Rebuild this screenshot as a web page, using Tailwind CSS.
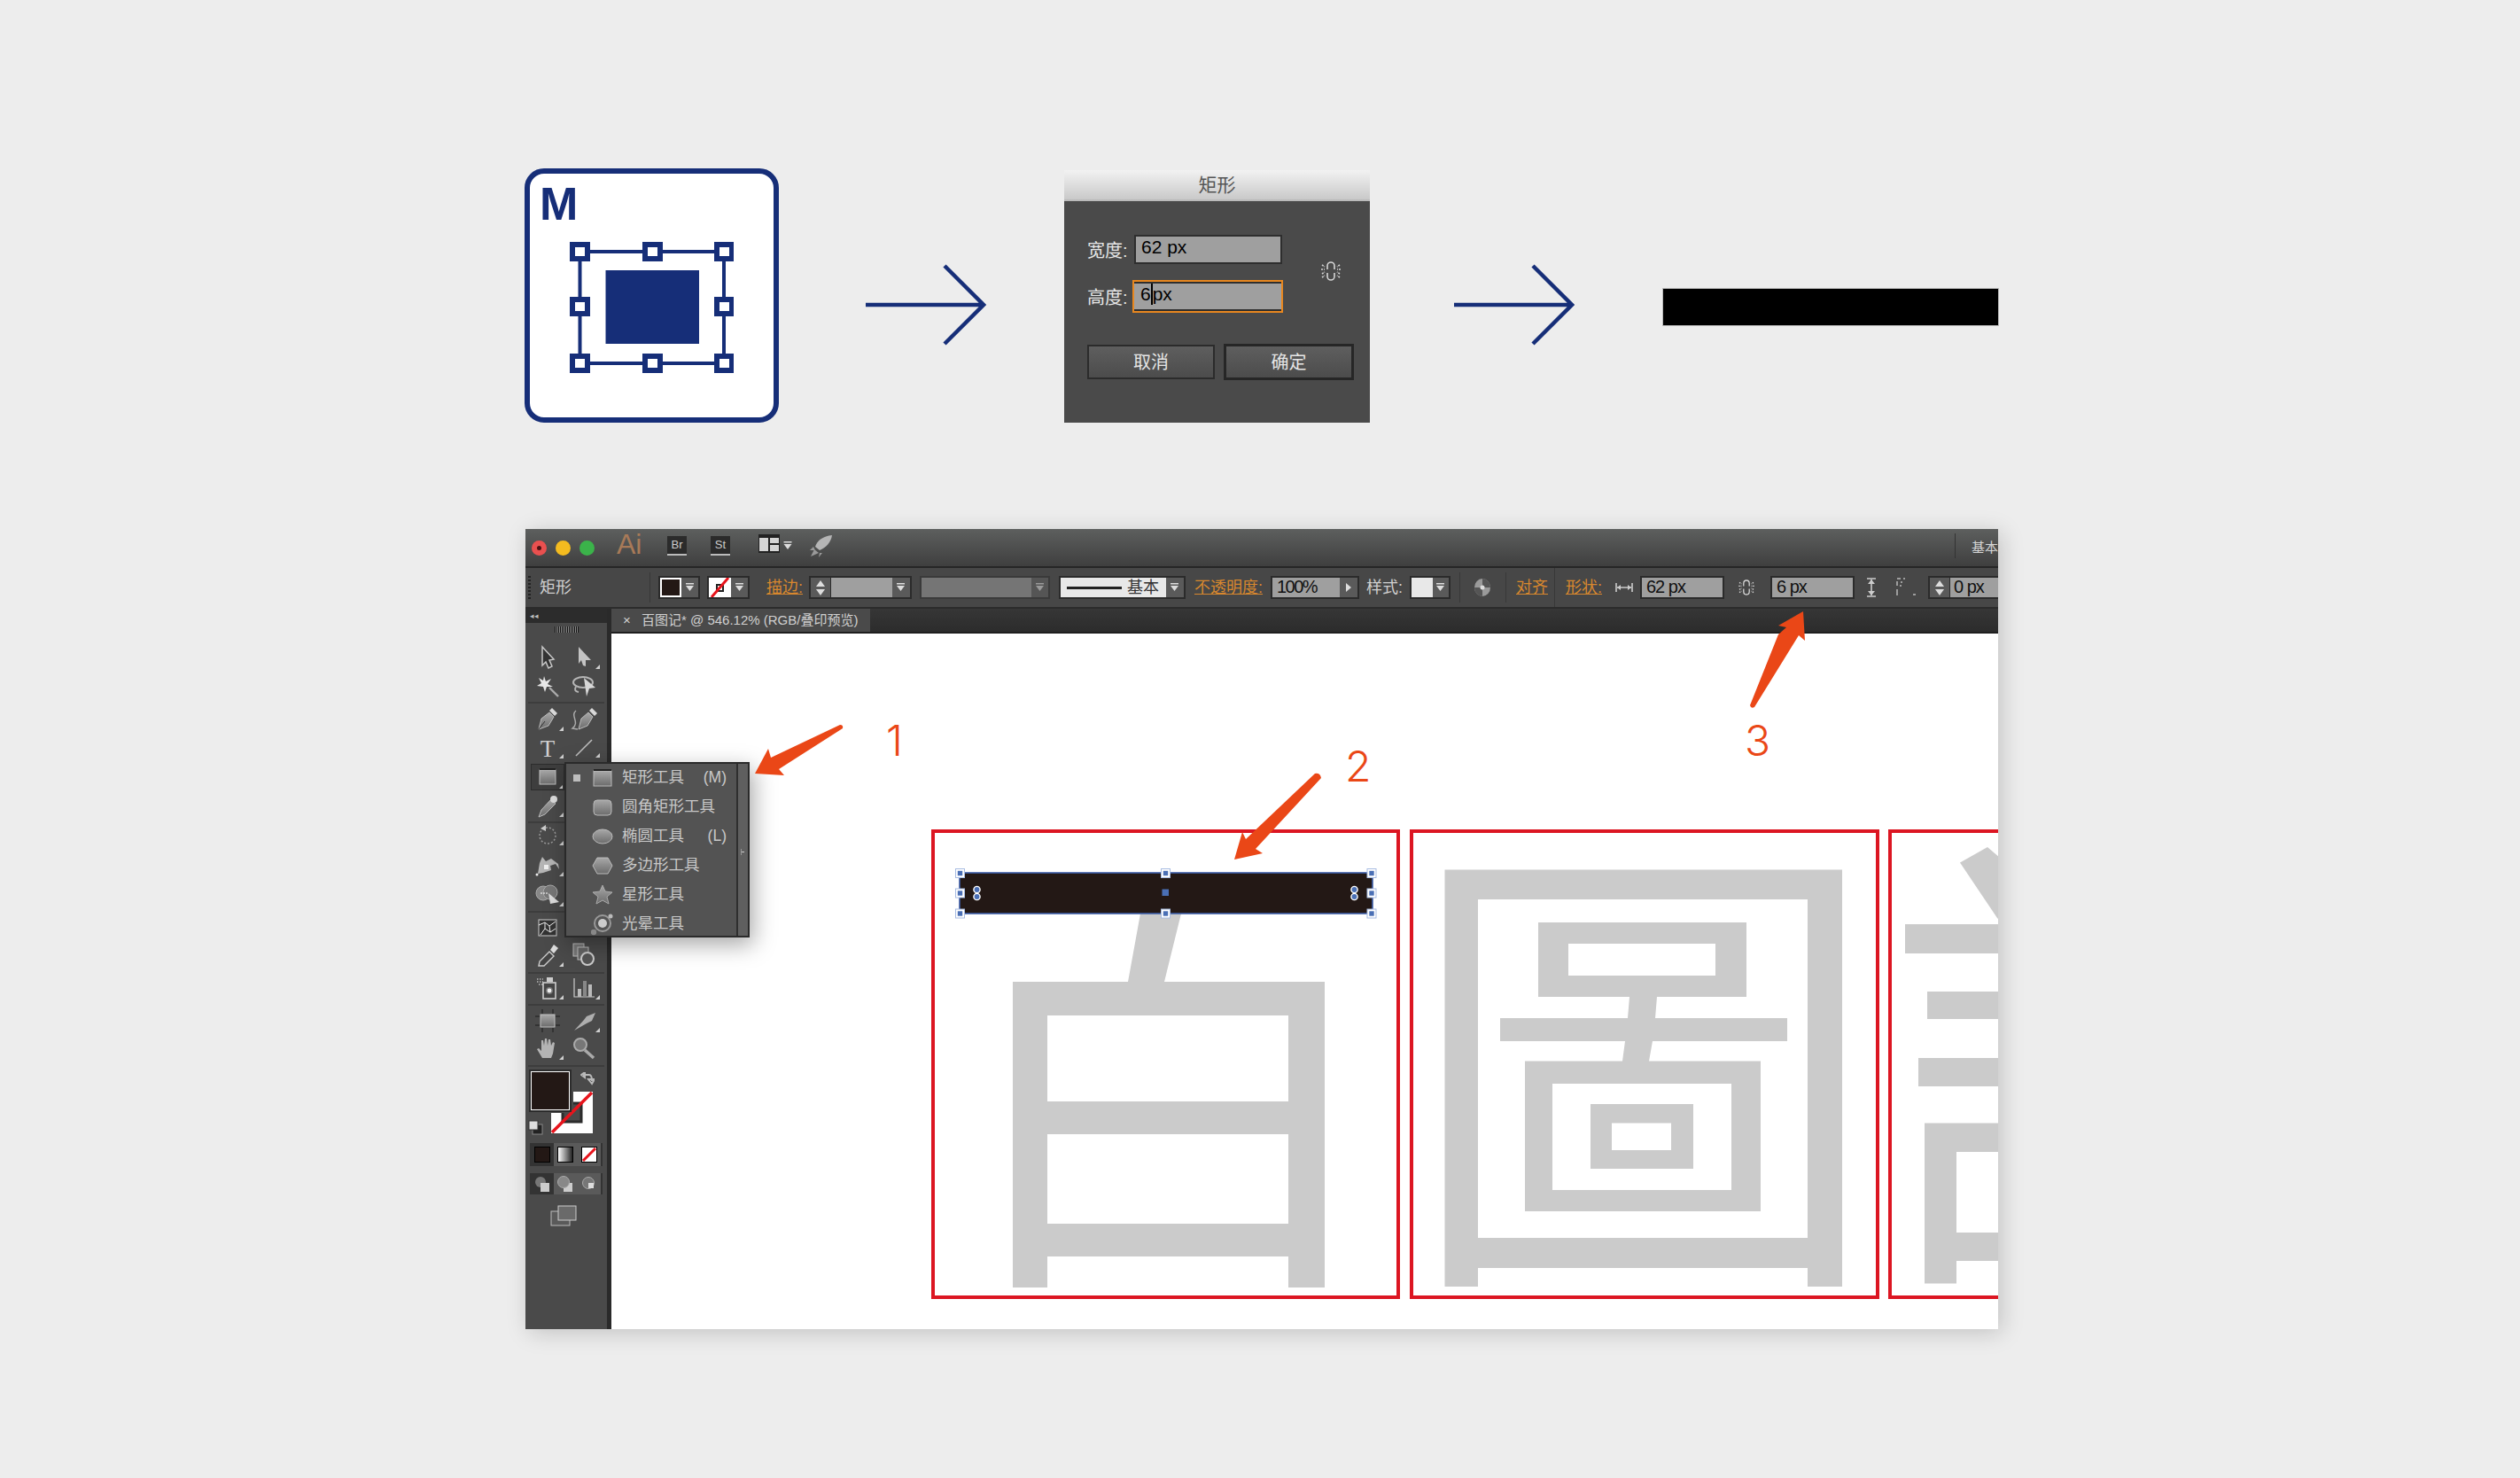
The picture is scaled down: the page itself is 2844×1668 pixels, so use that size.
<!DOCTYPE html>
<html lang="zh">
<head>
<meta charset="utf-8">
<title>矩形工具</title>
<script src="https://cdn.jsdelivr.net/npm/@tailwindcss/browser@4"></script>
</head>
<body>
<svg class="absolute w-0 h-0">
  <defs>
    <linearGradient id="g" x1="0" y1="0" x2="0" y2="1"><stop offset="0" stop-color="#a8a8a8"/><stop offset="1" stop-color="#6c6c6c"/></linearGradient>
    <path id="tri" d="M13 13 L18 13 L18 8Z" fill="#d0d0d0"/>
    <g id="dd"><rect x="0" y="0" width="9" height="1.5" fill="#ddd"/><path d="M0 3 H9 L4.5 9Z" fill="#ddd"/></g>
    <g id="h"><rect x="-5" y="-5" width="10" height="10" fill="#fff" stroke="#a8bce2" stroke-width="1"/><rect x="-2.7" y="-2.7" width="5.4" height="5.4" fill="#4a6fb5"/></g>
    <g id="eight"><circle cx="0" cy="-4" r="3.6" fill="#4a6fb5" stroke="#fff" stroke-width="1.4"/><circle cx="0" cy="4" r="3.6" fill="#4a6fb5" stroke="#fff" stroke-width="1.4"/></g>
    <g id="lnk" fill="none" stroke="#d6d6d6" stroke-width="1.6"><path d="M-4 -2 V-6 A4 4 0 0 1 4 -6 V-2"/><path d="M-4 2 V6 A4 4 0 0 0 4 6 V2"/><path d="M-10 -7 L-7 -5 M-11 -2 H-7 M-10 3 L-7 1 M-10 7 L-7 5 M10 -7 L7 -5 M11 -2 H7 M10 3 L7 1 M10 7 L7 5" stroke-dasharray="2 1"/></g>
  </defs>
</svg>

<div class="relative w-[2844px] h-[1668px] overflow-hidden bg-[#ededed] font-['Liberation_Sans','Noto_Sans_CJK_SC',sans-serif]">

  <!-- top row -->
  <div class="flex items-start pt-[190px] pl-[592px] h-[597px]">
    <div class="flex flex-col w-[287px] h-[287px] shrink-0 rounded-[22px] border-[6px] border-[#162e78] bg-white">
      <div class="mt-[8px] ml-[11px] text-[52px] leading-[52px] font-bold text-[#162e78]">M</div>
      <svg class="mt-[17px] ml-[45px]" width="185" height="148" viewBox="0 0 185 148">
        <rect x="11.5" y="11" width="162.5" height="126" fill="none" stroke="#162e78" stroke-width="4"/>
        <rect x="40.5" y="32" width="105.5" height="83" fill="#162e78"/>
        <g fill="#fff" stroke="#162e78" stroke-width="6">
          <rect x="3" y="3" width="17" height="16"/><rect x="85" y="3" width="17" height="16"/><rect x="166" y="3" width="17" height="16"/>
          <rect x="3" y="65" width="17" height="16"/><rect x="166" y="65" width="17" height="16"/>
          <rect x="3" y="129" width="17" height="16"/><rect x="85" y="129" width="17" height="16"/><rect x="166" y="129" width="17" height="16"/>
        </g>
      </svg>
    </div>

    <svg class="ml-[98px] mt-[108px] shrink-0" width="136" height="92" viewBox="0 0 136 92"><path d="M0 46 H133 M89 2 L133 46 L89 90" fill="none" stroke="#162e78" stroke-width="4.5"/></svg>

    <div class="ml-[88px] mt-[2px] w-[345px] h-[285px] shrink-0 flex flex-col bg-[#4a4a4a] rounded-t-[3px]">
      <div class="h-[35px] pt-[1px] flex items-center justify-center text-[21px] text-[#555] bg-[linear-gradient(to_bottom,#f2f2f2,#c9c9c9)] border-b-2 border-[#bbb]">矩形</div>
      <div class="flex pl-[26px] pt-[38px]">
        <div class="flex flex-col w-[221px]">
          <div class="flex items-center h-[33px]">
            <span class="w-[53px] mt-[3px] shrink-0 text-[20px] text-[#e6e6e6]">宽度:</span>
            <div class="w-[167px] h-[33px] shrink-0 flex items-start pl-[6px] border-2 border-[#2e2e2e] bg-[#9f9f9f] text-[21px] leading-[24px] text-black">62 px</div>
          </div>
          <div class="flex items-center h-[37px] mt-[18px]">
            <span class="w-[51px] mt-[2px] shrink-0 text-[20px] text-[#e6e6e6]">高度:</span>
            <div class="w-[170px] h-[37px] shrink-0 flex items-start pl-[7px] pt-[2px] border-2 border-[#e8871f] bg-[#9f9f9f] shadow-[inset_0_-2px_0_#2e2e2e,inset_0_2px_0_#2e2e2e] text-[21px] leading-[24px] text-black">6<span class="w-[2px] h-[24px] bg-black"></span>px</div>
          </div>
        </div>
        <svg class="ml-[40px] mt-[27px]" width="28" height="28" viewBox="-14 -14 28 28"><use href="#lnk"/></svg>
      </div>
      <div class="flex items-center pl-[26px] mt-[35px]">
        <div class="w-[144px] h-[39px] flex items-center justify-center border-2 border-[#2b2b2b] bg-[linear-gradient(to_bottom,#5e5e5e,#4c4c4c)] text-[20px] text-[#e6e6e6]">取消</div>
        <div class="ml-[10px] w-[147px] h-[41px] flex items-center justify-center border-[3px] border-[#262626] bg-[linear-gradient(to_bottom,#5e5e5e,#4c4c4c)] text-[20px] text-[#e6e6e6]">确定</div>
      </div>
    </div>

    <svg class="ml-[95px] mt-[108px] shrink-0" width="136" height="92" viewBox="0 0 136 92"><path d="M0 46 H133 M89 2 L133 46 L89 90" fill="none" stroke="#162e78" stroke-width="4.5"/></svg>

    <div class="ml-[99px] mt-[135px] w-[380px] h-[43px] shrink-0 bg-black border border-[#b8b8b8]"></div>
  </div>

  <!-- window -->
  <div class="relative ml-[593px] w-[1662px] h-[903px] flex flex-col bg-[#4a4a4a] shadow-[4px_4px_24px_rgba(0,0,0,0.18)]">
    <!-- title bar -->
    <div class="h-[44px] shrink-0 flex items-center overflow-hidden border-b-2 border-[#262626] bg-[linear-gradient(to_bottom,#5d5f5e,#3f3f3f)] pl-[7px]">
      <span class="w-[17px] h-[17px] shrink-0 rounded-full bg-[#e9504f] flex items-center justify-center"><span class="w-[5px] h-[5px] rounded-full bg-[#4a1212]"></span></span>
      <span class="ml-[10px] w-[17px] h-[17px] shrink-0 rounded-full bg-[#f4bb1f]"></span>
      <span class="ml-[10px] w-[17px] h-[17px] shrink-0 rounded-full bg-[#3bb34a]"></span>
      <span class="ml-[25px] w-[28px] -mt-[8px] shrink-0 text-[32px] leading-[32px] text-[#a87a58]">Ai</span>
      <span class="ml-[29px] w-[22px] h-[22px] -mt-[4px] shrink-0 flex items-center justify-center bg-[#2b2b2b] border-b-2 border-[#bbb] text-[13px] text-[#ccc]">Br</span>
      <span class="ml-[27px] w-[22px] h-[22px] -mt-[4px] shrink-0 flex items-center justify-center bg-[#2b2b2b] border-b-2 border-[#bbb] text-[13px] text-[#ccc]">St</span>
      <svg class="ml-[32px] -mt-[8px] shrink-0" width="24" height="22" viewBox="0 0 24 22"><rect width="24" height="2" fill="#222"/><rect x="0" y="2" width="24" height="19" fill="#222"/><rect x="1" y="4" width="10" height="15" fill="#d5d5d5"/><rect x="13" y="4" width="10" height="6" fill="#d5d5d5"/><rect x="13" y="12" width="10" height="7" fill="#d5d5d5"/></svg>
      <svg class="ml-[3px] -mt-[4px] shrink-0" width="12" height="12" viewBox="0 0 12 12"><use href="#dd" x="1.5" y="1"/></svg>
      <svg class="ml-[19px] -mt-[2px] shrink-0" width="26" height="26" viewBox="0 0 26 26"><path d="M25 0 C15 1 8 6 6 13 L11 17 C18 14 24 8 25 0Z" fill="#b5b5b5"/><path d="M4 13 L0 17 L6 17Z M11 20 L10 25 L14 20Z M5 16 L1 24 L10 20Z" fill="#999"/></svg>
      <span class="ml-[1266px] w-[1px] h-[28px] -mt-[4px] shrink-0 bg-[#333]"></span>
      <span class="ml-[18px] w-[30px] shrink-0 whitespace-nowrap text-[15px] text-[#d6d6d6]">基本</span>
    </div>

    <!-- control bar -->
    <div class="h-[46px] shrink-0 flex items-center overflow-hidden border-b-2 border-[#2b2b2b] bg-[#474747] text-[18px] text-[#d0d0d0]">
      <span class="ml-[3px] w-[3px] h-[27px] shrink-0 bg-[repeating-linear-gradient(to_bottom,#222_0,#222_2px,transparent_2px,transparent_4px)]"></span>
      <span class="ml-[10px] w-[36px] mt-[1px] shrink-0">矩形</span>
      <span class="ml-[88px] w-[1px] h-[34px] shrink-0 bg-[#383838]"></span>
      <div class="ml-[9px] w-[47px] h-[26px] shrink-0 flex border-2 border-[#2b2b2b] bg-[#5a5a5a]">
        <span class="w-[24px] h-full border-2 border-white bg-[#231815]"></span>
        <span class="flex-1 flex items-center justify-center"><svg width="10" height="10"><use href="#dd"/></svg></span>
      </div>
      <div class="ml-[8px] w-[48px] h-[26px] shrink-0 flex border-2 border-[#2b2b2b] bg-[#5a5a5a]">
        <svg width="25" height="22" viewBox="0 0 25 22"><rect width="25" height="22" fill="#fff"/><rect x="9" y="8" width="7" height="7" fill="none" stroke="#222" stroke-width="2"/><path d="M3 22 L22 0" stroke="#e8141c" stroke-width="3"/></svg>
        <span class="flex-1 flex items-center justify-center"><svg width="10" height="10"><use href="#dd"/></svg></span>
      </div>
      <span class="ml-[19px] w-[40px] mt-[1px] shrink-0 whitespace-nowrap underline text-[#d8872e]">描边:</span>
      <div class="ml-[8px] w-[116px] h-[26px] shrink-0 flex border-2 border-[#2b2b2b] bg-[#5a5a5a]">
        <span class="w-[23px] flex flex-col items-center justify-center gap-[3px] border-r border-[#2b2b2b]"><svg width="10" height="7"><path d="M0 7 H10 L5 0Z" fill="#ddd"/></svg><svg width="10" height="7"><path d="M0 0 H10 L5 7Z" fill="#ddd"/></svg></span>
        <span class="w-[69px] bg-[#9f9f9f]"></span>
        <span class="flex-1 flex items-center justify-center"><svg width="10" height="10"><use href="#dd"/></svg></span>
      </div>
      <div class="ml-[9px] w-[147px] h-[26px] shrink-0 flex border-2 border-[#3a3a3a] bg-[#555]">
        <span class="w-[124px] bg-[#757575]"></span>
        <span class="flex-1 flex items-center justify-center opacity-50"><svg width="10" height="10"><use href="#dd"/></svg></span>
      </div>
      <div class="ml-[10px] w-[143px] h-[26px] shrink-0 flex border-2 border-[#2b2b2b] bg-[#5a5a5a]">
        <span class="w-[119px] flex items-center bg-[#e8e8e8] pl-[7px] text-[#333]"><span class="w-[62px] h-[3px] bg-[#222]"></span><span class="ml-[6px] text-[18px] leading-[20px]">基本</span></span>
        <span class="flex-1 flex items-center justify-center"><svg width="10" height="10"><use href="#dd"/></svg></span>
      </div>
      <span class="ml-[10px] w-[77px] mt-[1px] shrink-0 whitespace-nowrap underline text-[#d8872e]">不透明度:</span>
      <div class="ml-[9px] w-[100px] h-[26px] shrink-0 flex border-2 border-[#2b2b2b] bg-[#5a5a5a]">
        <span class="w-[76px] pl-[5px] bg-[#9f9f9f] text-[20px] leading-[20px] tracking-[-1.5px] text-[#111]">100%</span>
        <span class="flex-1 flex items-center justify-center"><svg width="8" height="10"><path d="M1 0 L7 5 L1 10Z" fill="#ddd"/></svg></span>
      </div>
      <span class="ml-[8px] w-[40px] mt-[1px] shrink-0 whitespace-nowrap">样式:</span>
      <div class="ml-[9px] w-[46px] h-[26px] shrink-0 flex border-2 border-[#2b2b2b] bg-[#5a5a5a]">
        <span class="w-[24px] bg-[#e8e8e8]"></span>
        <span class="flex-1 flex items-center justify-center"><svg width="10" height="10"><use href="#dd"/></svg></span>
      </div>
      <span class="ml-[10px] w-[1px] h-[34px] shrink-0 bg-[#383838]"></span>
      <svg class="ml-[16px] shrink-0" width="18" height="20" viewBox="0 0 18 20"><ellipse cx="9" cy="10" rx="9" ry="10" fill="#9a9a9a"/><path d="M9 10 L9 0 A9 10 0 0 1 18 10Z M9 10 L9 20 A9 10 0 0 1 0 10Z" fill="#555"/><circle cx="9" cy="10" r="2.5" fill="#ddd"/></svg>
      <span class="ml-[17px] w-[1px] h-[34px] shrink-0 bg-[#383838]"></span>
      <span class="ml-[11px] w-[36px] mt-[1px] shrink-0 whitespace-nowrap underline text-[#d8872e]">对齐</span>
      <span class="ml-[7px] w-[1px] h-[44px] shrink-0 bg-[#383838]"></span>
      <span class="ml-[12px] w-[40px] mt-[1px] shrink-0 whitespace-nowrap underline text-[#d8872e]">形状:</span>
      <svg class="ml-[16px] shrink-0" width="20" height="12" viewBox="0 0 20 12"><path d="M1 1 V11 M19 1 V11 M2 6 H18" stroke="#ccc" stroke-width="1.6" fill="none"/><path d="M2 6 L6 3 V9Z M18 6 L14 3 V9Z" fill="#ccc"/></svg>
      <div class="ml-[8px] w-[95px] h-[26px] shrink-0 pl-[5px] border-2 border-[#2b2b2b] bg-[#9f9f9f] text-[20px] leading-[20px] tracking-[-1px] text-[#111]">62 px</div>
      <svg class="ml-[14px] shrink-0" width="22" height="22" viewBox="-11 -11 22 22"><use href="#lnk" transform="scale(0.8)"/></svg>
      <div class="ml-[16px] w-[95px] h-[26px] shrink-0 pl-[5px] border-2 border-[#2b2b2b] bg-[#9f9f9f] text-[20px] leading-[20px] tracking-[-1px] text-[#111]">6 px</div>
      <svg class="ml-[13px] shrink-0" width="12" height="22" viewBox="0 0 12 22"><path d="M1 1 H11 M1 21 H11 M6 2 V20" stroke="#ccc" stroke-width="1.6" fill="none"/><path d="M6 2 L2 7 H10Z M6 20 L2 15 H10Z" fill="#ccc"/></svg>
      <svg class="ml-[22px] shrink-0" width="22" height="22" viewBox="0 0 22 22"><path d="M1 1 H5 M8 1 H10 M1 4 V9 M1 13 V20 M5 5 H7 M5 8 V10 M19 19 H22" stroke="#bbb" stroke-width="1.5" fill="none"/></svg>
      <div class="ml-[14px] w-[100px] h-[26px] shrink-0 flex border-2 border-[#2b2b2b] bg-[#5a5a5a]">
        <span class="w-[23px] flex flex-col items-center justify-center gap-[3px] border-r border-[#2b2b2b]"><svg width="10" height="7"><path d="M0 7 H10 L5 0Z" fill="#ddd"/></svg><svg width="10" height="7"><path d="M0 0 H10 L5 7Z" fill="#ddd"/></svg></span>
        <span class="flex-1 pl-[4px] bg-[#9f9f9f] text-[20px] leading-[20px] tracking-[-1px] text-[#111]">0 px</span>
      </div>
    </div>

    <!-- body -->
    <div class="flex-1 flex min-h-0">
      <!-- tool panel -->
      <div class="w-[97px] shrink-0 flex flex-col bg-[#4a4a4a] border-r-[5px] border-[#2a2a2a]">
        <div class="h-[16px] shrink-0 flex items-center pl-[5px] bg-[#2c2c2c] text-[9px] leading-[9px] text-[#bbb]">◂◂</div>
        <div class="h-[23px] shrink-0 flex justify-center pt-[4px]"><span class="w-[27px] h-[7px] bg-[repeating-linear-gradient(to_right,#111_0,#111_1px,#8a8a8a_1px,#8a8a8a_2px)]"></span></div>

        <div class="h-[32px] shrink-0 flex pl-[4px]">
          <div class="w-[41px] flex items-center justify-center"><svg width="40" height="32" viewBox="-20 -16 40 32"><path d="M-6 -12 L7 2 L2 3 L5 10 L1 12 L-2 5 L-6 9Z" fill="#333" stroke="#c8c8c8" stroke-width="1.5"/></svg></div>
          <div class="w-[41px] flex items-center justify-center"><svg width="40" height="32" viewBox="-20 -16 40 32"><path d="M-6 -12 L8 3 L2 3 L2 10 L-1 9 L-3 3 L-6 7Z" fill="#c4c4c4"/><use href="#tri"/></svg></div>
        </div>
        <div class="h-[34px] shrink-0 flex pl-[4px]">
          <div class="w-[41px] flex items-center justify-center"><svg width="40" height="32" viewBox="-20 -16 40 32"><path d="M2 1 L12 11" stroke="#aaa" stroke-width="2.4"/><path d="M-4 -12 L-2 -6 L4 -9 L0 -3 L6 0 L-1 0 L-3 6 L-5 0 L-12 -1 L-7 -4 L-10 -10 L-5 -7Z" fill="#e8e8e8"/></svg></div>
          <div class="w-[41px] flex items-center justify-center"><svg width="40" height="32" viewBox="-20 -16 40 32"><ellipse cx="-1" cy="-5" rx="11" ry="6" fill="none" stroke="#b5b5b5" stroke-width="2"/><path d="M-9 0 Q-12 5 -6 6" fill="none" stroke="#b5b5b5" stroke-width="2"/><path d="M0 -10 L13 1 L6 2 L3 11Z" fill="#d8d8d8"/></svg></div>
        </div>
        <div class="h-[2px] mx-[3px] shrink-0 bg-[#3d3d3d]"></div>
        <div class="h-[36px] shrink-0 flex pl-[4px]">
          <div class="w-[41px] flex items-center justify-center"><svg width="40" height="32" viewBox="-20 -16 40 32"><path d="M-10 11 L-7 -1 L2 -8 L7 -3 L1 7Z" fill="url(#g)" stroke="#bbb"/><path d="M2 -10 L5 -13 L11 -7 L8 -4Z" fill="#d8d8d8"/><path d="M-10 11 L-3 2" stroke="#333"/><use href="#tri"/></svg></div>
          <div class="w-[41px] flex items-center justify-center"><svg width="40" height="32" viewBox="-20 -16 40 32"><path d="M-6 11 L-3 -1 L5 -8 L10 -3 L4 7Z" fill="url(#g)" stroke="#bbb"/><path d="M6 -10 L9 -13 L15 -7 L12 -4Z" fill="#d8d8d8"/><path d="M-9 -10 C-16 -4 -4 3 -13 10 L-7 11" fill="none" stroke="#aaa" stroke-width="1.5"/></svg></div>
        </div>
        <div class="h-[28px] shrink-0 flex pl-[4px]">
          <div class="w-[41px] flex items-center justify-center"><svg width="40" height="32" viewBox="-20 -16 40 32"><text x="0" y="10" text-anchor="middle" font-family="Liberation Serif" font-size="27" fill="#d0d0d0">T</text><use href="#tri" y="-1"/></svg></div>
          <div class="w-[41px] flex items-center justify-center"><svg width="40" height="32" viewBox="-20 -16 40 32"><path d="M-9 9 L9 -9" stroke="#bdbdbd" stroke-width="1.6"/><use href="#tri" y="-2"/></svg></div>
        </div>
        <div class="h-[38px] shrink-0 flex pl-[4px]">
          <div class="w-[41px] flex items-center justify-center"><div class="w-[38px] h-[30px] flex items-center justify-center bg-[#3e3e3e] border border-[#2c2c2c]"><svg width="36" height="28" viewBox="-18 -14 36 28"><rect x="-9" y="-8" width="18" height="16" fill="url(#g)" stroke="#c0c0c0"/><rect x="-9" y="-10" width="18" height="2" fill="#222"/><path d="M13 13 L17 13 L17 9Z" fill="#d0d0d0"/></svg></div></div>
          <div class="w-[41px]"></div>
        </div>
        <div class="h-[28px] shrink-0 flex pl-[4px]">
          <div class="w-[41px] flex items-center justify-center"><svg width="40" height="32" viewBox="-20 -16 40 32"><path d="M-10 12 L-7 4 L4 -8 L9 -3 L-3 9Z" fill="url(#g)" stroke="#bbb"/><circle cx="7" cy="-8" r="4" fill="#ddd"/><use href="#tri" y="-1"/></svg></div>
          <div class="w-[41px]"></div>
        </div>
        <div class="h-[2px] mt-[3px] mx-[3px] shrink-0 bg-[#3d3d3d]"></div>
        <div class="h-[28px] shrink-0 flex pl-[4px]">
          <div class="w-[41px] flex items-center justify-center"><svg width="40" height="32" viewBox="-20 -16 40 32"><circle cx="0" cy="0" r="9" fill="none" stroke="#999" stroke-width="1.5" stroke-dasharray="2 2"/><path d="M-8 -8 L-2 -12 L-2 -5Z" fill="#ccc"/><use href="#tri" y="-2"/></svg></div>
          <div class="w-[41px]"></div>
        </div>
        <div class="h-[40px] shrink-0 flex pl-[4px]">
          <div class="w-[41px] flex items-center justify-center"><svg width="40" height="32" viewBox="-20 -16 40 32"><path d="M-11 9 L-9 -3 L-6 -10 L-2 -5 L4 -8 L12 -2 L13 4 L9 -2 L3 0 L4 5 L-5 8Z" fill="#b5b5b5"/><rect x="-4" y="-1" width="5" height="5" fill="#eee"/><circle cx="-12" cy="10" r="1.5" fill="#eee"/><use href="#tri" y="-1"/></svg></div>
          <div class="w-[41px]"></div>
        </div>
        <div class="h-[26px] shrink-0 flex pl-[4px]">
          <div class="w-[41px] flex items-center justify-center"><svg width="40" height="32" viewBox="-20 -16 40 32"><circle cx="-5" cy="-2" r="8" fill="#888" stroke="#aaa"/><circle cx="3" cy="-3" r="8" fill="#777" stroke="#aaa"/><path d="M-8 -2 H1" stroke="#fff" stroke-dasharray="2 1"/><path d="M1 -2 L13 8 L3 10Z" fill="#ddd"/><use href="#tri"/></svg></div>
          <div class="w-[41px]"></div>
        </div>
        <div class="h-[2px] mt-[5px] mx-[3px] shrink-0 bg-[#3d3d3d]"></div>
        <div class="h-[34px] shrink-0 flex pl-[4px]">
          <div class="w-[41px] flex items-center justify-center"><svg width="40" height="32" viewBox="-20 -16 40 32"><rect x="-10" y="-9" width="20" height="18" fill="#333" stroke="#ccc"/><path d="M-10 -3 L-3 -6 L2 -2 L9 -7 M-8 8 L-3 1 L3 5 L9 1 M-3 -6 L-3 1 M2 -2 L3 5" stroke="#eee" fill="none"/></svg></div>
          <div class="w-[41px]"></div>
        </div>
        <div class="h-[28px] shrink-0 flex pl-[4px]">
          <div class="w-[41px] flex items-center justify-center"><svg width="40" height="32" viewBox="-20 -16 40 32"><path d="M-10 12 L-9 7 L2 -4 L7 1 L-4 12Z" fill="#444" stroke="#ccc" stroke-width="1.4"/><path d="M3 -6 L7 -12 L12 -8 L7 -2Z" fill="#ddd"/><use href="#tri"/></svg></div>
          <div class="w-[41px] flex items-center justify-center"><svg width="40" height="32" viewBox="-20 -16 40 32"><rect x="-12" y="-13" width="12" height="14" fill="#777" stroke="#bbb"/><rect x="-7" y="-9" width="12" height="14" fill="#666" stroke="#bbb"/><circle cx="4" cy="4" r="7" fill="#555" stroke="#ccc" stroke-width="2"/></svg></div>
        </div>
        <div class="h-[2px] mt-[5px] mx-[3px] shrink-0 bg-[#3d3d3d]"></div>
        <div class="h-[32px] shrink-0 flex pl-[4px]">
          <div class="w-[41px] flex items-center justify-center"><svg width="40" height="32" viewBox="-20 -16 40 32"><rect x="-5" y="-6" width="14" height="18" fill="#444" stroke="#ccc" stroke-width="1.6"/><rect x="-1" y="-12" width="7" height="5" fill="#ccc"/><circle cx="2" cy="3" r="3.2" fill="#eee" stroke="#777" stroke-width="1.5"/><path d="M-12 -10 H-5 M-12 -7 H-5 M-10 -4 H-5" stroke="#eee" stroke-dasharray="1.5 1.5"/><use href="#tri"/></svg></div>
          <div class="w-[41px] flex items-center justify-center"><svg width="40" height="32" viewBox="-20 -16 40 32"><path d="M-11 -11 V10 H12" fill="none" stroke="#ccc" stroke-width="1.2"/><rect x="-7" y="1" width="4" height="9" fill="#bbb"/><rect x="-1" y="-8" width="4" height="18" fill="#888"/><rect x="5" y="-4" width="4" height="14" fill="#bbb"/><use href="#tri"/></svg></div>
        </div>
        <div class="h-[2px] mt-[2px] mx-[3px] shrink-0 bg-[#3d3d3d]"></div>
        <div class="h-[34px] shrink-0 flex pl-[4px]">
          <div class="w-[41px] flex items-center justify-center"><svg width="40" height="32" viewBox="-20 -16 40 32"><rect x="-8" y="-7" width="16" height="14" fill="url(#g)" stroke="#c0c0c0"/><path d="M-14 -5 H-9 M9 -5 H14 M-14 5 H-9 M9 5 H14 M-6 -13 V-8 M6 -13 V-8 M-6 8 V13 M6 8 V13" stroke="#2c2c2c" stroke-width="1.5"/></svg></div>
          <div class="w-[41px] flex items-center justify-center"><svg width="40" height="32" viewBox="-20 -16 40 32"><path d="M-11 11 L0 -1 L3 -5 L13 -9 L9 0 L3 3 Z" fill="#aeaeae"/><use href="#tri"/></svg></div>
        </div>
        <div class="h-[28px] shrink-0 flex pl-[4px]">
          <div class="w-[41px] flex items-center justify-center"><svg width="40" height="32" viewBox="-20 -16 40 32"><path d="M-6 11 L-12 1 L-10 0 L-7 3 L-7 -9 L-5 -9 L-4 -3 L-3 -11 L-1 -11 L0 -3 L1 -10 L3 -10 L4 -3 L6 -7 L8 -6 L6 6 L4 11Z" fill="#b4b4b4"/><use href="#tri"/></svg></div>
          <div class="w-[41px] flex items-center justify-center"><svg width="40" height="32" viewBox="-20 -16 40 32"><circle cx="-4" cy="-4" r="7" fill="#777" stroke="#aaa" stroke-width="2"/><path d="M1 2 L11 11" stroke="#aaa" stroke-width="3.5"/></svg></div>
        </div>
        <div class="h-[2px] mt-[5px] mx-[3px] shrink-0 bg-[#3d3d3d]"></div>

        <div class="relative h-[79px] shrink-0">
          <svg class="absolute left-[29px] top-[28px]" width="47" height="47" viewBox="0 0 47 47"><rect width="47" height="47" fill="#fff"/><rect x="13" y="13" width="21" height="21" fill="#4a4a4a" stroke="#2c2c2c" stroke-width="3"/><rect x="0" y="0" width="25" height="24" fill="#4a4a4a"/><path d="M1 46 L46 1" stroke="#e8141c" stroke-width="3.5"/></svg>
          <div class="absolute left-[4px] top-[3px] w-[48px] h-[48px] border-2 border-[#2c2c2c] bg-white p-[1px]"><div class="w-full h-full bg-[#231815]"></div></div>
          <svg class="absolute left-[62px] top-[6px]" width="16" height="16" viewBox="0 0 16 16"><path d="M3 3 H10 Q13 3 13 10 M13 13 L9 8 H16Z M1 3 L5 0 V6Z" fill="none" stroke="#b8b8b8" stroke-width="2"/></svg>
          <svg class="absolute left-[3px] top-[60px]" width="17" height="17" viewBox="0 0 17 17"><rect x="5" y="5" width="11" height="11" fill="#222" stroke="#888"/><rect x="1" y="1" width="10" height="10" fill="#ddd" stroke="#333"/></svg>
        </div>

        <div class="mt-[7px] mx-[5px] h-[26px] shrink-0 flex items-center bg-[#333]">
          <div class="w-[27px] h-full flex items-center justify-center bg-[#333]"><span class="w-[18px] h-[18px] border border-black bg-[#231815]"></span></div>
          <div class="w-[26px] h-full flex items-center justify-center bg-[#5a5a5a]"><span class="w-[18px] h-[18px] border border-black bg-[linear-gradient(to_right,#fff,#222)]"></span></div>
          <div class="w-[27px] h-full flex items-center justify-center bg-[#5a5a5a]"><svg width="18" height="18" viewBox="0 0 18 18"><rect x="0.5" y="0.5" width="17" height="17" fill="#fff" stroke="#000"/><path d="M2 16 L16 2" stroke="#e8141c" stroke-width="3"/></svg></div>
        </div>
        <div class="mt-[8px] mx-[5px] h-[24px] shrink-0 flex items-center bg-[#333]">
          <div class="w-[27px] h-full flex items-center justify-center bg-[#333]"><svg width="20" height="20" viewBox="0 0 20 20"><circle cx="8" cy="8" r="6" fill="#777"/><rect x="8" y="9" width="10" height="10" fill="#ccc"/></svg></div>
          <div class="w-[26px] h-full flex items-center justify-center bg-[#5a5a5a]"><svg width="20" height="20" viewBox="0 0 20 20"><rect x="8" y="9" width="10" height="10" fill="#ccc"/><circle cx="8" cy="8" r="6.5" fill="#888" stroke="#aaa"/></svg></div>
          <div class="w-[27px] h-full flex items-center justify-center bg-[#5a5a5a]"><svg width="20" height="20" viewBox="0 0 20 20"><circle cx="9" cy="9" r="6.5" fill="#777" stroke="#aaa"/><rect x="9" y="9" width="6" height="6" fill="#ddd"/></svg></div>
        </div>
        <svg class="mt-[12px] ml-[28px] shrink-0" width="30" height="24" viewBox="0 0 30 24"><rect x="1" y="7" width="21" height="16" fill="#5a5a5a" stroke="#bbb"/><rect x="9" y="1" width="20" height="16" fill="#6a6a6a" stroke="#ccc"/></svg>
      </div>

      <!-- tabs + canvas -->
      <div class="flex-1 min-w-0 flex flex-col">
        <div class="h-[28px] shrink-0 flex bg-[linear-gradient(to_bottom,#363636,#2c2c2c)] border-b-2 border-[#1f1f1f]">
          <div class="w-[292px] h-[26px] flex items-center bg-[#4a4a4a] text-[15px] text-[#d0d0d0] whitespace-nowrap">
            <span class="ml-[13px] w-[21px]">×</span><span class="mt-[1px]">百图记* @ 546.12% (RGB/叠印预览)</span>
          </div>
        </div>
        <div class="flex-1 min-h-0 bg-white overflow-hidden">
          <svg width="1565" height="785" viewBox="690 715 1565 785">
            <g fill="none" stroke="#dc1622" stroke-width="4">
              <rect x="1053" y="938" width="525" height="526"/>
              <rect x="1593" y="938" width="526" height="526"/>
              <rect x="2133" y="938" width="200" height="526"/>
            </g>
            <g fill="#cbcbcb" fill-rule="evenodd">
              <path d="M1143 1108 H1273 L1287 1031 H1333 L1314 1108 H1495 V1453 H1454 V1418 H1182 V1453 H1143Z M1182 1146 H1454 V1243 H1182Z M1182 1280 H1454 V1381 H1182Z"/>
              <path d="M1630.5 981.5 H2079 V1452 H2040 V1431 H1668 V1452 H1630.5Z M1668 1015 H2040 V1397 H1668Z"/>
              <path d="M1736 1041 H1971 V1125 H1870 L1868 1149 H2017 V1175 H1865 L1861 1197.5 H1987 V1367 H1721 V1197.5 H1831 L1834 1175 H1693 V1149 H1837 L1839 1125 H1736Z M1770 1065 H1936 V1101 H1770Z M1752 1223 H1954 V1343 H1752Z"/>
              <path d="M1795 1246 H1911 V1319 H1795Z M1819 1267.5 H1886 V1298 H1819Z"/>
              <path d="M2212 973.5 L2243 956 L2256 967 V1038 L2254 1036Z"/>
              <path d="M2150 1043 H2256 V1076 H2150Z M2175 1119 H2256 V1150 H2175Z M2165 1194 H2256 V1226 H2165Z"/>
              <path d="M2172 1267.5 H2256 V1423 H2208 V1448.5 H2172Z M2208 1300 H2256 V1391 H2208Z"/>
            </g>
            <rect x="1083" y="985" width="466" height="46" fill="#231815" stroke="#3d5ea8" stroke-width="1.6"/>
            <use href="#h" x="1083.5" y="985.5"/><use href="#h" x="1315.5" y="985.5"/><use href="#h" x="1548" y="985.5"/>
            <use href="#h" x="1083.5" y="1008"/><use href="#h" x="1548" y="1008"/>
            <use href="#h" x="1083.5" y="1031"/><use href="#h" x="1315.5" y="1031"/><use href="#h" x="1548" y="1031"/>
            <rect x="1311.5" y="1003.5" width="7.5" height="7.5" fill="#4a6fb5"/>
            <use href="#eight" x="1102.5" y="1008"/><use href="#eight" x="1528.5" y="1008"/>
          </svg>
        </div>
      </div>
    </div>

    <!-- flyout -->
    <div class="absolute left-[44px] top-[263px] w-[209px] h-[198px] flex border-2 border-[#2a2a2a] bg-[#535353] shadow-[4px_8px_24px_rgba(0,0,0,0.35)] text-[17.5px] leading-[33px] text-[#c8c8c8]">
      <div class="flex-1 flex flex-col pt-[1px] -mt-[2px]">
        <div class="h-[33px] flex items-center pl-[8px]"><span class="w-[8px] h-[8px] shrink-0 bg-[#bdbdbd]"></span><svg class="ml-[12px] shrink-0" width="26" height="26" viewBox="-13 -13 26 26"><rect x="-10" y="-8" width="20" height="17" fill="url(#g)" stroke="#bbb"/><rect x="-10" y="-10" width="20" height="2" fill="#222"/></svg><span class="ml-[9px] w-[118px] flex justify-between"><span>矩形工具</span><span>(M)</span></span></div>
        <div class="h-[33px] flex items-center pl-[28px]"><svg class="shrink-0" width="26" height="26" viewBox="-13 -13 26 26"><rect x="-10" y="-8" width="20" height="17" rx="4" fill="url(#g)" stroke="#bbb"/></svg><span class="ml-[9px] w-[118px] whitespace-nowrap">圆角矩形工具</span></div>
        <div class="h-[33px] flex items-center pl-[28px]"><svg class="shrink-0" width="26" height="26" viewBox="-13 -13 26 26"><ellipse cx="0" cy="0" rx="11" ry="8" fill="url(#g)" stroke="#bbb"/></svg><span class="ml-[9px] w-[118px] flex justify-between"><span>椭圆工具</span><span>(L)</span></span></div>
        <div class="h-[33px] flex items-center pl-[28px]"><svg class="shrink-0" width="26" height="26" viewBox="-13 -13 26 26"><path d="M-6 -9 H6 L11 0 L6 9 H-6 L-11 0Z" fill="url(#g)" stroke="#bbb"/></svg><span class="ml-[9px] w-[118px] whitespace-nowrap">多边形工具</span></div>
        <div class="h-[33px] flex items-center pl-[28px]"><svg class="shrink-0" width="26" height="26" viewBox="-13 -13 26 26"><path d="M0 -11 L3 -4 L11 -3 L5 2 L7 10 L0 6 L-7 10 L-5 2 L-11 -3 L-3 -4Z" fill="url(#g)" stroke="#aaa"/></svg><span class="ml-[9px] w-[118px] whitespace-nowrap">星形工具</span></div>
        <div class="h-[33px] flex items-center pl-[28px]"><svg class="shrink-0" width="26" height="26" viewBox="-13 -13 26 26"><circle cx="0" cy="-1" r="9" fill="#555" stroke="#999" stroke-width="2"/><circle cx="0" cy="-1" r="5" fill="#ccc"/><circle cx="9" cy="-9" r="2.5" fill="#bbb"/><circle cx="-10" cy="9" r="3.2" fill="#888"/></svg><span class="ml-[9px] w-[118px] whitespace-nowrap">光晕工具</span></div>
      </div>
      <div class="w-[13px] shrink-0 flex items-center justify-center border-l-2 border-[#2f2f2f] bg-[#5f5f5f]"><svg width="5" height="7" class="mt-[5px]"><path d="M0 0 V7 M1 3.5 H4" stroke="#ccc"/></svg></div>
    </div>
  </div>

  <!-- annotations -->
  <svg class="absolute left-0 top-0" width="2844" height="1668" viewBox="0 0 2844 1668">
    <g fill="#ea4717">
      <path d="M948 818 Q952 818 951 822 L879 868 L885 875 L852 873 L867 845 L870 855Z"/>
      <path d="M1484 873 Q1490 872 1491 878 L1417 958 L1425 963 L1393 970 L1402 939 L1406 947Z"/>
      <path d="M1975 796 L2007 716 L2016 708 L2007 706 L2035 690 L2037 723 L2030 717 L1980 798 Q1976 800 1975 796Z"/>
    </g>
  </svg>
  <div class="absolute left-[1000px] top-[812px] text-[48px] leading-[48px] font-light text-[#ea4717] font-['Inter',sans-serif]">1</div>
  <div class="absolute left-[1518px] top-[841px] text-[48px] leading-[48px] font-light text-[#ea4717] font-['Inter',sans-serif]">2</div>
  <div class="absolute left-[1969px] top-[812px] text-[48px] leading-[48px] font-light text-[#ea4717] font-['Inter',sans-serif]">3</div>
</div>
</body>
</html>
